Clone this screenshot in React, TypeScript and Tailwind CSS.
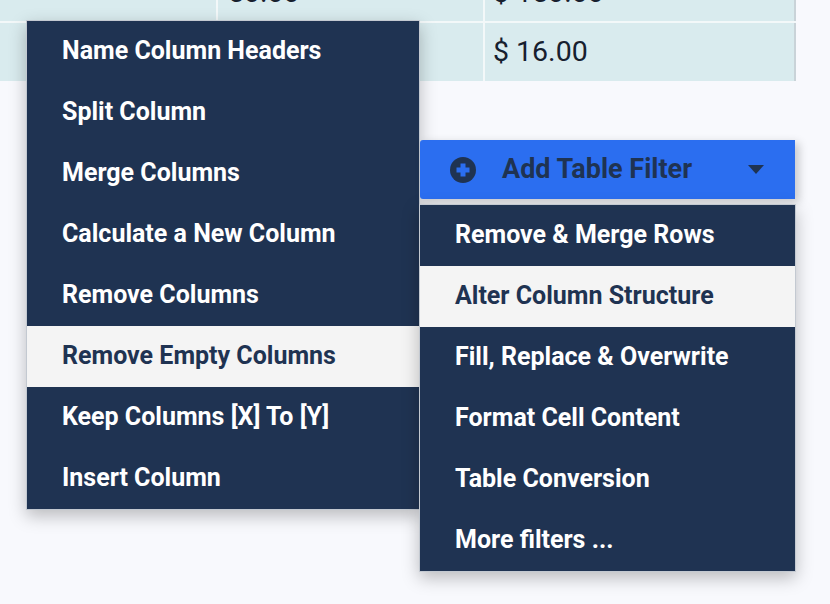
import React from "react";

const leftItems = [
  "Name Column Headers",
  "Split Column",
  "Merge Columns",
  "Calculate a New Column",
  "Remove Columns",
  "Remove Empty Columns",
  "Keep Columns [X] To [Y]",
  "Insert Column",
];

const rightItems = [
  "Remove & Merge Rows",
  "Alter Column Structure",
  "Fill, Replace & Overwrite",
  "Format Cell Content",
  "Table Conversion",
  "More filters ...",
];

const rows = [
  ["", "50.00", "$ 150.00"],
  ["", "", "$ 16.00"],
];

const MenuItem: React.FC<{ label: string; active?: boolean }> = ({ label, active }) => (
  <div
    className={`h-[61px] flex items-center pl-[35px] pb-[1px] text-[25px] font-bold ${
      active ? "bg-[#f4f4f4] text-[#1f3352]" : "text-white"
    }`}
  >
    {label}
  </div>
);

export default function App() {
  return (
    <div
      className="relative w-[830px] h-[604px] overflow-hidden bg-[#f8f9fd]"
      style={{ fontFamily: "Roboto, 'Liberation Sans', sans-serif" }}
    >
      <table className="-mt-[39px] w-[796px] border-collapse bg-[#d9ebee] border-r-2 border-[#c9d3d8] text-[28.5px] text-[#17202e]">
        <tbody>
          {rows.map((r, i) => (
            <tr key={i} className={i === 0 ? "h-[61px] border-b-2 border-[#f3f8f9]" : "h-[59px]"}>
              <td className="w-[217px] border-r-2 border-[#f3f8f9]"></td>
              <td className={`w-[267px] border-r-2 border-[#f3f8f9] pl-[10px] ${i === 0 ? "pt-[4px]" : ""}`}>{r[1]}</td>
              <td className={`pl-[8px] ${i === 0 ? "pt-[4px]" : ""}`}>{r[2]}</td>
            </tr>
          ))}
        </tbody>
      </table>

      {/* column actions menu */}
      <div className="absolute left-[26px] top-[20px] w-[394px] bg-[#1f3352] border border-[#c3c9d1] shadow-[0_6px_16px_rgba(0,0,0,0.25)]">
        {leftItems.map((l) => (
          <MenuItem key={l} label={l} active={l === "Remove Empty Columns"} />
        ))}
      </div>

      {/* add table filter dropdown */}
      <div className="absolute left-[419px] top-[140px] w-[377px] flex flex-col gap-[5px]">
        <div className="ml-px mr-px h-[59px] bg-[#2b6ef0] rounded-l-[3px] flex items-center pl-[30px] pr-[31px] shadow-[4px_3px_10px_rgba(0,0,0,0.2)] text-[#1f3352]">
          <svg width="26" height="26" viewBox="0 0 26 26">
            <circle cx="13" cy="13" r="13" fill="#1f3352" />
            <rect x="6.5" y="10.5" width="13" height="5" fill="#2b6ef0" />
            <rect x="10.5" y="6.5" width="5" height="13" fill="#2b6ef0" />
          </svg>
          <span className="ml-[26px] text-[27px] font-bold">Add Table Filter</span>
          <svg className="ml-auto" width="16" height="9" viewBox="0 0 16 9">
            <path d="M0 0 H16 L8 9 Z" fill="#1f3352" />
          </svg>
        </div>
        <div className="bg-[#1f3352] border border-[#c3c9d1] shadow-[0_6px_16px_rgba(0,0,0,0.25)]">
          {rightItems.map((l) => (
            <MenuItem key={l} label={l} active={l === "Alter Column Structure"} />
          ))}
        </div>
      </div>
    </div>
  );
}
